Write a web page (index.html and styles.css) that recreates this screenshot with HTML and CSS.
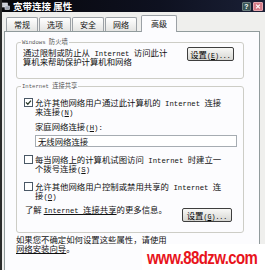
FILE: index.html
```html
<!DOCTYPE html>
<html>
<head>
<meta charset="utf-8">
<link rel="stylesheet" href="styles.css">
</head>
<body>
<div class="win">
  <div class="title">
    <svg class="ticon" viewBox="0 0 8 8"><rect x="0.5" y="1" width="5" height="4" fill="#c8ccd4" stroke="#e8e8ee" stroke-width="0.6"/><rect x="3" y="4" width="4.5" height="3.5" fill="#9aa2b0" stroke="#dfe2ea" stroke-width="0.6"/></svg>
    <span class="ttext">宽带连接 属性</span>
    <span class="tbtn help">?</span>
    <span class="tbtn close"><svg viewBox="0 0 10 9"><path d="M2.5 2 L7.5 7 M7.5 2 L2.5 7" stroke="#fff" stroke-width="1.4"/></svg></span>
  </div>
  <div class="tabs">
    <div class="tab">常规</div>
    <div class="tab">选项</div>
    <div class="tab">安全</div>
    <div class="tab">网络</div>
    <div class="tab sel">高级</div>
  </div>
  <div class="panel">
    <fieldset class="grp fw">
      <legend><span class="lat">Windows </span>防火墙</legend>
      <div class="row">
        <div class="txt">通过限制或防止从<span class="lat"> Internet </span>访问此计<br>算机来帮助保护计算机和网络</div>
        <button class="btn b1">设置<span class="lat">(<u>E</u>)...</span></button>
      </div>
    </fieldset>
    <fieldset class="grp ics">
      <legend><span class="lat">Internet </span>连接共享</legend>
      <div class="chk">
        <span class="box"><svg viewBox="0 0 7 7"><path d="M1 3.4 L2.8 5.2 L6 1.6" fill="none" stroke="#2a3a2a" stroke-width="1.3"/></svg></span>
        <div class="txt">允许其他网络用户通过此计算机的<span class="lat"> Internet </span>连接<br>来连接<span class="lat">(<u>N</u>)</span></div>
      </div>
      <div class="lbl">家庭网络连接<span class="lat">(<u>H</u>):</span></div>
      <div class="combo">无线网络连接</div>
      <div class="chk cb2">
        <span class="box"></span>
        <div class="txt">每当网络上的计算机试图访问<span class="lat"> Internet </span>时建立一<br>个拨号连接<span class="lat">(<u>S</u>)</span></div>
      </div>
      <div class="chk cb3">
        <span class="box"></span>
        <div class="txt">允许其他网络用户控制或禁用共享的<span class="lat"> Internet </span>连<br>接<span class="lat">(<u>O</u>)</span></div>
      </div>
      <div class="info">
        <div class="txt">了解 <span class="link"><span class="lat">Internet </span>连接共享</span>的更多信息。</div>
        <button class="btn b2">设置<span class="lat">(<u>G</u>)...</span></button>
      </div>
    </fieldset>
    <div class="note txt">如果您不确定如何设置这些属性，请使用<br><span class="link">网络安装向导</span>。</div>
  </div>
  <div class="wm"><span class="wmt">www.88dzw.com</span></div>
</div>
</body>
</html>
```

FILE: styles.css
```css
* { box-sizing: border-box; }
html, body { margin: 0; padding: 0; }
body {
  width: 265px;
  height: 270px;
  overflow: hidden;
  background: #efefed;
  font-family: "Noto Sans CJK SC", sans-serif;
  font-size: 8.4px;
  line-height: 9px;
  color: #111;
}
.win {
  position: relative;
  height: 270px;
  border-left: 2px solid #2b2b2b;
  background: #efefed;
}
.title {
  height: 12px;
  display: flex;
  align-items: center;
  padding: 0 2px 0 0;
  background: linear-gradient(to right, #07070b, #0e1120 60%, #1a2036);
  color: #fff;
}
.ticon { width: 8px; height: 8px; margin-right: 3px; flex: none; }
.ttext {
  flex: 1;
  font-size: 9.5px;
  font-weight: bold;
  line-height: 12px;
  white-space: nowrap;
}
.tbtn {
  height: 9px;
  display: flex;
  align-items: center;
  justify-content: center;
  border-radius: 1px;
  flex: none;
}
.help {
  width: 9px;
  margin-right: 2px;
  background: #3b5656;
  border: 1px solid #6c8080;
  font-family: "Liberation Sans", sans-serif;
  font-weight: bold;
  font-size: 7px;
  line-height: 7px;
}
.close {
  width: 10px;
  background: #d67c88;
  border: 1px solid #e8a8b0;
}
.close svg { width: 8px; height: 7px; }
.tabs {
  display: flex;
  align-items: flex-end;
  height: 14px;
  margin-top: 5px;
  padding-left: 4px;
}
.tab {
  width: 32px;
  height: 14px;
  margin-right: 1px;
  border: 1px solid #9ca1a6;
  border-bottom: none;
  border-radius: 2px 2px 0 0;
  background: linear-gradient(#ffffff, #e4e4e2);
  text-align: center;
  font-size: 8px;
  line-height: 13px;
}
.tab.sel {
  position: relative;
  z-index: 1;
  width: 36px;
  height: 17px;
  margin-left: 3px;
  margin-bottom: -1px;
  background: #fcfcfe;
  line-height: 16px;
}
.panel {
  width: 256px;
  height: 260px;
  margin-left: 2px;
  padding-top: 5px;
  border: 1px solid #919b9c;
  background: #fcfcfe;
}
.grp {
  width: 228px;
  min-width: 0;
  margin: 0 0 0 11px;
  border: 1px solid #cdcdc6;
  border-radius: 3px;
  padding: 1px 9px 12px 6px;
}
.grp legend {
  padding: 0 1px;
  margin-left: -2px;
  font-size: 6.3px;
  line-height: 10px;
  color: #555;
}
.lat {
  font-family: "Liberation Mono", monospace;
  font-size: 7.3px;
  line-height: 0;
}
.grp legend .lat { font-size: 5.6px; }
.txt { white-space: nowrap; height: auto; }
.row {
  display: flex;
  justify-content: space-between;
  align-items: flex-start;
}
.btn {
  height: 14px;
  padding: 0;
  border: 1px solid #3e3e3e;
  border-radius: 2px;
  background: linear-gradient(#f8f8f6, #d6d6d2);
  color: #000;
  font-family: "Noto Sans CJK SC", sans-serif;
  font-size: 8.4px;
  line-height: 12px;
  white-space: nowrap;
}
.btn .lat { font-size: 6.6px; }
.b1 { width: 47px; margin-top: -1px; }
.ics { margin-top: 2px; padding: 7px 9px 10px 6px; }
.chk { display: flex; margin-left: 1px; }
.box {
  width: 9px;
  height: 9px;
  margin-right: 2px;
  flex: none;
  border: 1px solid #4a5866;
  background: #fff;
  display: flex;
}
.box svg { width: 7px; height: 7px; }
.cb2 { margin-top: 8px; }
.cb3 { margin-top: 9px; }
.lbl { margin: 6px 0 0 12px; }
.combo {
  width: 202px;
  height: 12px;
  margin: 4px 0 0 12px;
  padding: 0 2px;
  border: 1px solid #a6acb2;
  background: #fff;
  line-height: 10px;
}
.info {
  display: flex;
  justify-content: space-between;
  align-items: flex-start;
  margin-top: 5px;
  padding-left: 2px;
}
.link { text-decoration: underline; }
.b2 { width: 50px; margin-top: 3px; margin-right: 2px; }
.note { margin: 2px 0 0 11px; }
.wm {
  position: absolute;
  left: 140px;
  top: 244px;
  width: 123px;
  height: 26px;
  background: #fff;
  padding: 4px 0 0 5px;
}
.wmt {
  display: inline-block;
  color: #e8141c;
  font-family: "Liberation Sans", Arial, sans-serif;
  font-weight: bold;
  font-size: 15px;
  line-height: 15px;
  letter-spacing: -0.6px;
  transform: scaleY(1.2);
  transform-origin: top left;
}
```
